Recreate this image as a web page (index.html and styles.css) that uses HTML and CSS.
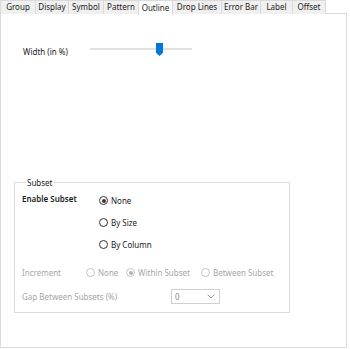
FILE: index.html
```html
<!DOCTYPE html>
<html>
    <head>
        <meta charset="utf-8">
        <title>Plot Details: Outline</title>
        <link rel="stylesheet" href="styles.css">
    </head>
    <body>
        <div id="tabs">
            <div class="tab">Group</div>
            <div class="tab">Display</div>
            <div class="tab">Symbol</div>
            <div class="tab">Pattern</div>
            <div class="tab active">Outline</div>
            <div class="tab">Drop Lines</div>
            <div class="tab">Error Bar</div>
            <div class="tab">Label</div>
            <div class="tab">Offset</div>
        </div>
        <div id="page">
            <div class="row width-row">
                <span class="lbl">Width (in %)</span>
                <div class="slider">
                    <div class="track"></div>
                    <div class="thumb"></div>
                </div>
            </div>

            <fieldset id="subset">
                <legend>Subset</legend>
                <div class="enable">
                    <span class="lbl b">Enable Subset</span>
                    <div class="choices">
                        <label class="radio"><span class="dot on"></span>None</label>
                        <label class="radio"><span class="dot"></span>By Size</label>
                        <label class="radio"><span class="dot"></span>By Column</label>
                    </div>
                </div>
                <div class="inc off">
                    <span class="lbl">Increment</span>
                    <label class="radio"><span class="dot"></span>None</label>
                    <label class="radio"><span class="dot on"></span>Within Subset</label>
                    <label class="radio"><span class="dot"></span>Between Subset</label>
                </div>
                <div class="gap off">
                    <span class="lbl">Gap Between Subsets (%)</span>
                    <div class="combo">
                        <span>0</span>
                        <svg width="8" height="5" viewBox="0 0 8 5"><path d="M0.5 0.5 L4 4 L7.5 0.5" fill="none" stroke="#a0a0a0" stroke-width="1"/></svg>
                    </div>
                </div>
            </fieldset>
        </div>
    </body>
</html>
```

FILE: styles.css
```css
html, body {
    height: 100%;
}
body {
    background-color: white;
    margin: 0;
    font-family: "Noto Sans", "Open Sans", sans-serif;
    font-size: 8px;
    line-height: 11px;
    color: #1a1a1a;
    overflow: hidden;
}

#tabs {
    display: flex;
    height: 14px;
    position: relative;
    z-index: 1;
}

.tab {
    box-sizing: border-box;
    height: 14px;
    line-height: 12px;
    text-align: center;
    background-color: #f0f0f0;
    border: 1px solid #dadada;
    border-bottom: none;
    margin-right: -1px;
    white-space: nowrap;
}

.tab:nth-child(1) { width: 36px; }
.tab:nth-child(2) { width: 34px; }
.tab:nth-child(3) { width: 36px; }
.tab:nth-child(4) { width: 36px; }
.tab:nth-child(5) { width: 35px; }
.tab:nth-child(6) { width: 50px; }
.tab:nth-child(7) { width: 40px; }
.tab:nth-child(8) { width: 33px; }
.tab:nth-child(9) { width: 34px; }

.tab.active {
    background-color: white;
    height: 15px;
    line-height: 13px;
}

#page {
    box-sizing: border-box;
    width: 347px;
    height: 335px;
    margin-top: -1px;
    border: 1px solid #dadada;
    padding: 0 0 0 13px;
}

.row {
    display: flex;
    align-items: center;
}

.width-row {
    margin-top: 29px;
    padding-left: 9px;
}

.width-row .lbl {
    width: 67px;
    padding-top: 3px;
}

.slider {
    position: relative;
    width: 102px;
    height: 14px;
}

.track {
    position: absolute;
    left: 0;
    right: 0;
    top: 5px;
    height: 2px;
    background-color: #e1e1e1;
}

.thumb {
    position: absolute;
    left: 66px;
    top: 0;
    width: 7px;
    height: 13px;
    background-color: #0078d7;
    clip-path: polygon(0 0, 100% 0, 100% 75%, 50% 100%, 0 75%);
}

#subset {
    box-sizing: border-box;
    width: 276px;
    height: 136px;
    margin: 120px 0 0 0;
    padding: 0 0 0 7px;
    border: 1px solid #dcdcdc;
}

#subset legend {
    padding: 0 1px;
    margin-left: 4px;
}

.b {
    font-weight: 600;
}

.enable {
    display: flex;
    margin-top: 5px;
}

.enable .lbl {
    width: 77px;
}

.choices {
    display: flex;
    flex-direction: column;
    gap: 11px;
    margin-top: 2px;
}

.radio {
    display: flex;
    align-items: center;
    gap: 3px;
}

.dot {
    box-sizing: border-box;
    flex: none;
    width: 9px;
    height: 9px;
    border: 1px solid #333;
    border-radius: 50%;
    position: relative;
}

.dot.on::after {
    content: "";
    position: absolute;
    left: 1.5px;
    top: 1.5px;
    width: 4px;
    height: 4px;
    border-radius: 50%;
    background-color: #333;
}

.off {
    color: #a6a6a6;
}

.off .dot {
    border-color: #c4c4c4;
}

.off .dot.on::after {
    background-color: #b4b4b4;
}

.inc {
    display: grid;
    grid-template-columns: 64px 40px 75px auto;
    align-items: center;
    margin-top: 17px;
}

.gap {
    display: flex;
    align-items: center;
    margin-top: 11px;
}

.gap .lbl {
    width: 149px;
}

.combo {
    box-sizing: border-box;
    width: 49px;
    height: 15px;
    border: 1px solid #d0d0d0;
    display: flex;
    align-items: center;
    justify-content: space-between;
    padding: 0 4px 0 3px;
    color: #8a8a8a;
}
```
